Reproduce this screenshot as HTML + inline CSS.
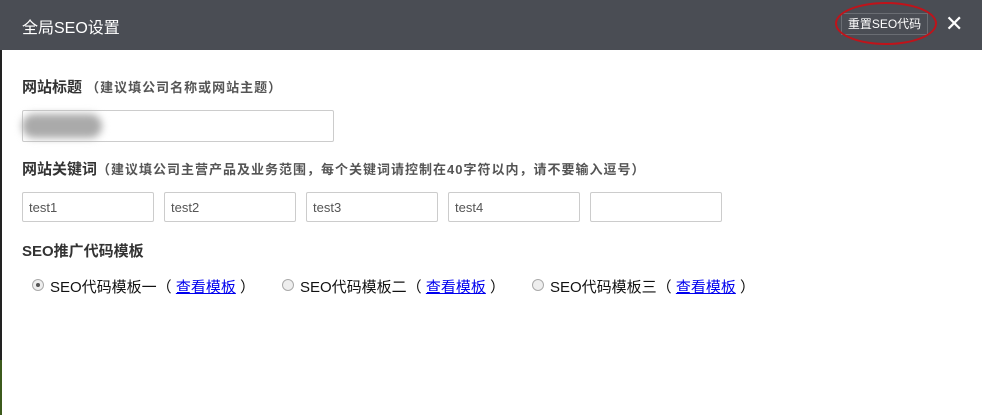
<!DOCTYPE html>
<html><head><meta charset="utf-8"><style>
body{margin:0;width:982px;height:415px;overflow:hidden;background:#fff;font-family:"Liberation Sans","Noto Sans CJK SC",sans-serif;position:relative}
.hd{position:absolute;left:0;top:0;width:982px;height:50px;background:#4a4d54;color:#fff}
.hd .t{position:absolute;left:22px;top:14px;font-size:16px}
.btn{position:absolute;left:841px;top:13px;width:85px;height:20px;border:1px solid #6a6d73;font-size:12px;line-height:20px;text-align:center;color:#fff}
.ell{position:absolute;left:835px;top:2px;width:102px;height:43px;border:2px solid #c0131a;border-radius:50%;box-sizing:border-box}
.x{position:absolute;left:945px;top:11px;font-size:22px;color:#fff}
.lb{position:absolute;left:22px;font-size:15px;font-weight:bold;color:#333}
.lb span{font-size:13px;letter-spacing:1px;font-weight:bold;color:#555}
.in{position:absolute;height:30px;border:1px solid #ccc;border-radius:2px;box-sizing:border-box;font-size:13px;color:#555;padding:7px 6px}
.blur{position:absolute;left:22px;top:114px;width:80px;height:24px;border-radius:12px;background:#aaa;filter:blur(4px)}
.r{position:absolute;top:276px;font-size:15px;color:#111}
.r i{display:inline-block;width:10px;height:10px;border:1px solid #aaa;border-radius:50%;background:#eee;margin-right:6px;vertical-align:1px;position:relative}
.r i.on::after{content:"";position:absolute;left:3px;top:3px;width:4px;height:4px;border-radius:50%;background:#555}
.r a{color:#00e;text-decoration:underline}
.lft{position:absolute;left:0;top:50px;width:2px;height:310px;background:#222}
.lft2{position:absolute;left:0;top:360px;width:2px;height:55px;background:#3c5a1c}
</style></head><body>
<div class="hd"><div class="t">全局SEO设置</div><div class="btn">重置SEO代码</div><div class="ell"></div><div class="x">✕</div></div>
<div class="lft"></div><div class="lft2"></div>
<div class="lb" style="top:76px">网站标题 <span>（建议填公司名称或网站主题）</span></div>
<div class="in" style="left:22px;top:110px;width:312px;height:32px"></div>
<div class="blur"></div>
<div class="lb" style="top:158px">网站关键词<span>（建议填公司主营产品及业务范围，每个关键词请控制在40字符以内，请不要输入逗号）</span></div>
<div class="in" style="left:22px;top:192px;width:132px">test1</div>
<div class="in" style="left:164px;top:192px;width:132px">test2</div>
<div class="in" style="left:306px;top:192px;width:132px">test3</div>
<div class="in" style="left:448px;top:192px;width:132px">test4</div>
<div class="in" style="left:590px;top:192px;width:132px"></div>
<div class="lb" style="top:240px">SEO推广代码模板</div>
<div class="r" style="left:32px"><i class="on"></i>SEO代码模板一（ <a>查看模板</a> ）</div>
<div class="r" style="left:282px"><i></i>SEO代码模板二（ <a>查看模板</a> ）</div>
<div class="r" style="left:532px"><i></i>SEO代码模板三（ <a>查看模板</a> ）</div>
</body></html>
